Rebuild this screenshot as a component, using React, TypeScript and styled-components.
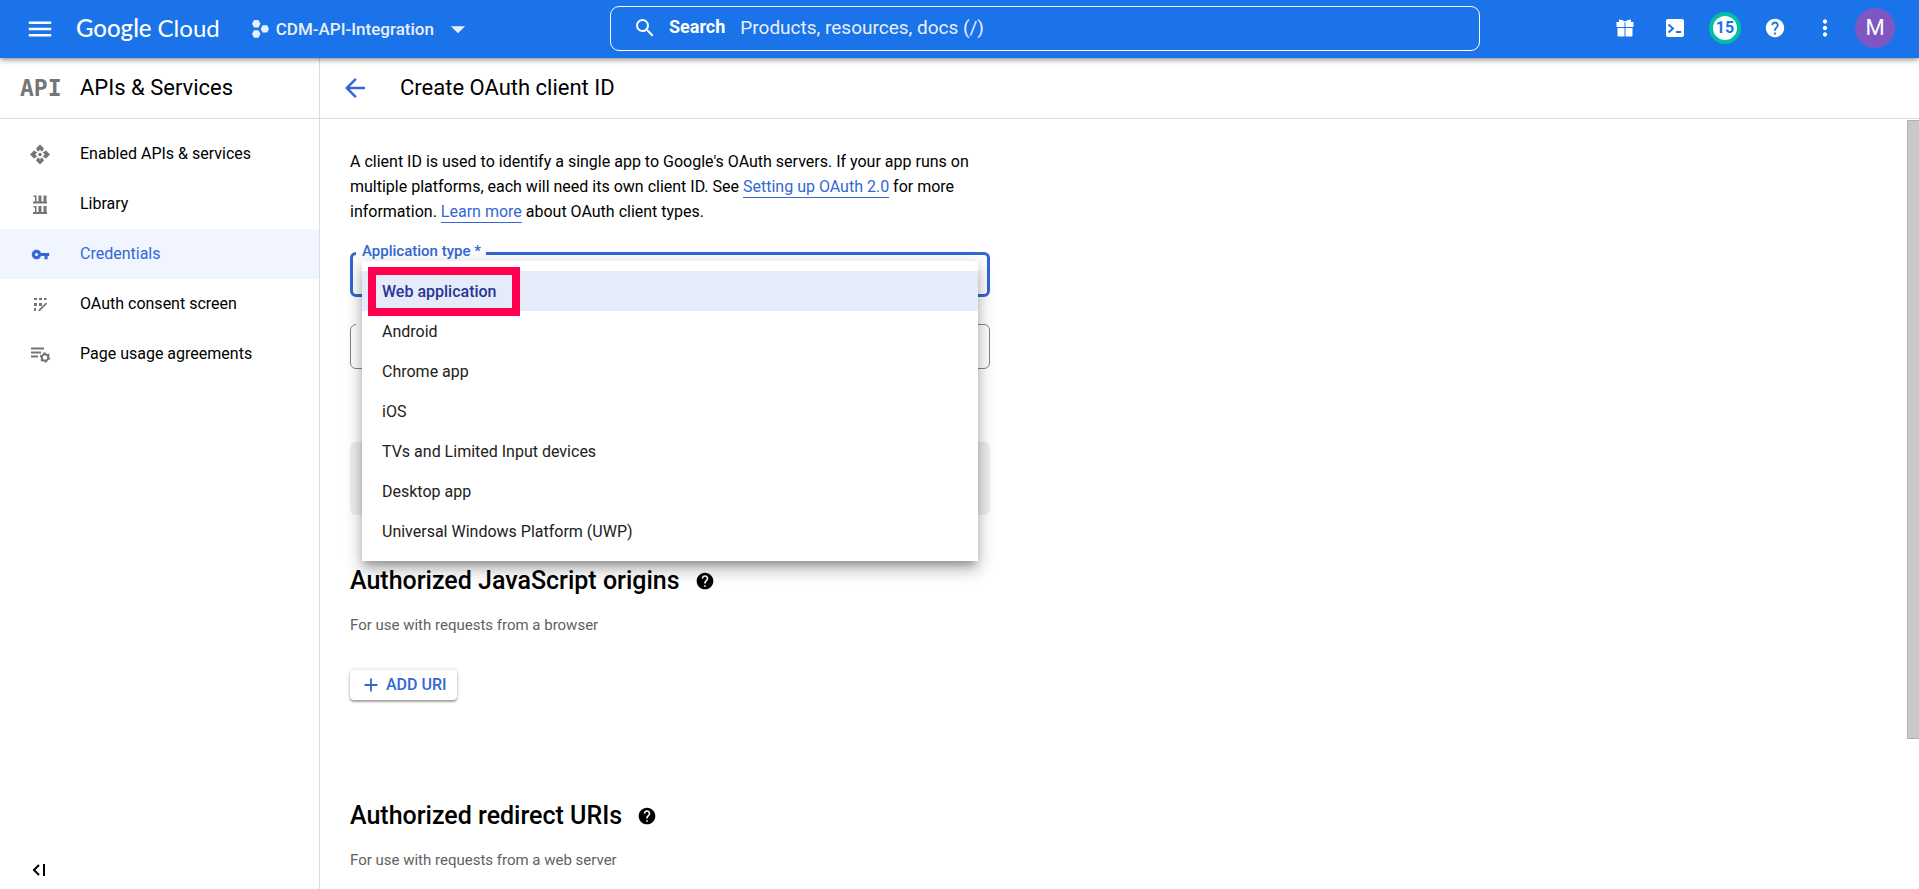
import React from "react";
import styled, { createGlobalStyle } from "styled-components";
import { MdMenu, MdSearch, MdHelp, MdMoreVert, MdVpnKey, MdArrowBack, MdAdd, MdArrowDropDown } from "react-icons/md";

const blue = "#3367d6";

const GlobalStyle = createGlobalStyle`
  * { box-sizing: border-box; }
  html, body, #root { height: 100%; }
  body { margin: 0; background: #fff; color: #000; font: 400 16px/20px Roboto, sans-serif; overflow: hidden; }
  button, input, select { font: inherit; color: inherit; }
  button { border: 0; padding: 0; background: none; cursor: pointer; }
  svg { display: block; flex: none; }
`;

const Page = styled.div`
  height: 100%;
  display: flex;
  flex-direction: column;
`;

const TopBar = styled.header`
  position: relative;
  z-index: 2;
  flex: none;
  height: 58px;
  display: flex;
  align-items: center;
  background: #1a73e8;
  color: #fff;
  box-shadow: 0 1px 6px rgba(0, 0, 0, 0.55);
`;

const BrandArea = styled.div`
  flex: none;
  width: 610px;
  display: flex;
  align-items: center;
  padding-left: 25px;
`;

const IconButton = styled.button`
  flex: none;
  width: 30px;
  height: 30px;
  display: flex;
  align-items: center;
  justify-content: center;
`;

const Logo = styled.a`
  margin-left: 21px;
  padding-bottom: 2px;
  display: flex;
  gap: 6px;
  color: #fff;
  text-decoration: none;
  font: 400 24px/30px Lato, sans-serif;
`;

const LogoStrong = styled.span`
  font-weight: 500;
`;

const ProjectButton = styled.button`
  margin-left: 32px;
  display: flex;
  align-items: center;
  gap: 7px;
  font-size: 17px;
  line-height: 24px;
  font-weight: 500;
  color: #e8f0fe;
`;

const SearchBox = styled.label`
  flex: 0 1 870px;
  height: 45px;
  display: flex;
  align-items: center;
  padding: 0 22px;
  margin-bottom: 2px;
  border: 1px solid #fff;
  border-radius: 9px;
  font-size: 18px;
  line-height: 24px;
`;

const SearchLabel = styled.span`
  margin: 0 15px 0 12px;
  padding-bottom: 2px;
  font-weight: 700;
`;

const SearchInput = styled.input`
  flex: 1;
  min-width: 0;
  border: 0;
  padding: 0;
  outline: 0;
  background: none;
  font-size: 19px;
  &::placeholder { color: #e8f0fe; opacity: 1; }
`;

const Tools = styled.div`
  margin: 0 24px 2px auto;
  display: flex;
  align-items: center;
  gap: 10px;
`;

const ToolButton = styled.button`
  width: 40px;
  height: 40px;
  display: flex;
  align-items: center;
  justify-content: center;
`;

const CountBadge = styled.span`
  width: 32px;
  height: 32px;
  border: 4px solid #00bfa5;
  border-radius: 50%;
  background: #fff;
  color: #1a73e8;
  font-size: 16px;
  line-height: 24px;
  font-weight: 700;
`;

const Avatar = styled.button`
  width: 40px;
  height: 40px;
  border-radius: 50%;
  background: #7e57c2;
  font-size: 22px;
`;

const Body = styled.div`
  flex: 1;
  min-height: 0;
  display: flex;
`;

const Sidebar = styled.nav`
  flex: none;
  width: 320px;
  display: flex;
  flex-direction: column;
  border-right: 1px solid #dadce0;
`;

const SidebarHead = styled.div`
  flex: none;
  height: 61px;
  display: flex;
  align-items: center;
  padding: 0 20px;
  border-bottom: 1px solid #dadce0;
  font-size: 22px;
  line-height: 28px;
`;

const ApiMark = styled.span`
  width: 60px;
  color: #757575;
  font: 700 23px/28px "DejaVu Sans Mono", monospace;
`;

const NavList = styled.div`
  flex: 1;
  padding-top: 10px;
`;

const NavLink = styled.a<{ $active?: boolean }>`
  height: 50px;
  display: flex;
  align-items: center;
  padding: 0 28px;
  text-decoration: none;
  color: ${(p) => (p.$active ? blue : "#000")};
  background: ${(p) => (p.$active ? "#f0f5ff" : "transparent")};
`;

const NavIcon = styled.span<{ $active?: boolean }>`
  width: 24px;
  margin-right: 28px;
  display: flex;
  justify-content: center;
  color: ${(p) => (p.$active ? blue : "#757575")};
`;

const Collapse = styled(IconButton)`
  margin: 0 0 4px 24px;
  color: #000;
`;

const Main = styled.main`
  flex: 1;
  min-width: 0;
  display: flex;
  flex-direction: column;
`;

const PageHead = styled.div`
  flex: none;
  height: 61px;
  display: flex;
  align-items: center;
  gap: 30px;
  padding-left: 20px;
  border-bottom: 1px solid #dadce0;
`;

const PageTitle = styled.h1`
  margin: 0;
  font-size: 22px;
  line-height: 28px;
  font-weight: 400;
`;

const ScrollArea = styled.div`
  flex: 1;
  min-height: 0;
  display: flex;
`;

const Form = styled.form`
  flex: 1;
  min-width: 0;
  overflow-y: auto;
  scrollbar-width: none;
  padding: 30px;
`;

const Track = styled.div`
  flex: none;
  width: 12px;
  padding-top: 1px;
`;

const Thumb = styled.div`
  height: 80.5%;
  background: #c9c9c9;
  border: 1px solid #b0b0b0;
  border-right: 0;
`;

const Intro = styled.p`
  max-width: 640px;
  margin: 0 0 28px;
  line-height: 25px;
`;

const InlineLink = styled.a`
  color: ${blue};
  text-decoration: underline 1px;
  text-underline-offset: 5px;
  text-decoration-skip-ink: none;
`;

const Field = styled.div`
  position: relative;
  max-width: 640px;
  height: 45px;
  margin-bottom: 27px;
`;

const FieldLabel = styled.label<{ $active?: boolean }>`
  position: absolute;
  left: 6px;
  top: -11px;
  padding: 0 5px 0 6px;
  background: #fff;
  font-size: 15px;
  line-height: 20px;
  font-weight: 500;
  color: ${(p) => (p.$active ? blue : "#757575")};
`;

const SelectBox = styled.select`
  width: 100%;
  height: 100%;
  appearance: none;
  background: #fff;
  border: 3px solid ${blue};
  border-radius: 6px;
  outline: 0;
`;

const TextBox = styled.input`
  width: 100%;
  height: 100%;
  background: #fff;
  border: 1px solid #80868b;
  border-radius: 6px;
  outline: 0;
`;

const Menu = styled.div`
  position: absolute;
  z-index: 1;
  top: 9px;
  left: 12px;
  right: 12px;
  padding: 10px 0;
  background: #fff;
  box-shadow: 0 6px 8px -3px rgba(0, 0, 0, 0.28), 0 10px 14px 1px rgba(0, 0, 0, 0.15), 0 3px 18px 2px rgba(0, 0, 0, 0.12);
`;

const Option = styled.button<{ $selected?: boolean }>`
  display: block;
  width: 100%;
  height: 40px;
  padding: 2px 20px 0;
  text-align: left;
  font-weight: ${(p) => (p.$selected ? 500 : 400)};
  color: ${(p) => (p.$selected ? "#283593" : "#212121")};
  background: ${(p) => (p.$selected ? "#e5ebf9" : "transparent")};
`;

const Highlight = styled.div`
  position: absolute;
  top: 6px;
  left: 6px;
  width: 152px;
  height: 49px;
  border: 8px solid #ff004f;
  pointer-events: none;
`;

const Notice = styled.div`
  max-width: 640px;
  height: 73px;
  margin: 73px 0 50px;
  border-radius: 6px;
  background: #eee;
`;

const Section = styled.section`
  margin-bottom: 100px;
`;

const SectionTitle = styled.h2`
  display: flex;
  align-items: center;
  gap: 15px;
  margin: 0 0 18px;
  font-size: 25px;
  line-height: 32px;
  font-weight: 500;
`;

const Hint = styled.p`
  margin: 0 0 35px;
  font-size: 15px;
  line-height: 20px;
  color: #616161;
`;

const AddButton = styled.button`
  height: 30px;
  display: flex;
  align-items: center;
  gap: 4px;
  padding: 0 10px;
  border-radius: 4px;
  background: #fff;
  color: ${blue};
  font-weight: 500;
  box-shadow: 0 2px 2px rgba(0, 0, 0, 0.3), 0 0 4px rgba(0, 0, 0, 0.18);
`;

const ProjectIcon = () => (
  <svg width="17" height="18" viewBox="0 0 17 18" fill="currentColor">
    <path d="M2 0h4.500l2 3.700-2 3.700H2L0 3.700zM2 10.300h4.500l2 3.700-2 3.700H2L0 14zM10.600 5.200h4.500l2 3.700-2 3.700h-4.500L8.700 8.900z" />
  </svg>
);

const GiftIcon = () => (
  <svg width="18" height="18" viewBox="0 0 18 18" fill="currentColor">
    <path d="M3 0.500l3 .5 3 1.500L12 1l3-.5V3h2.500v5H9.500V3.500h-1V8H0.500V3H3zM1.500 9h7v8.500h-6a1 1 0 0 1-1-1zM9.500 9h7v7.500a1 1 0 0 1-1 1h-6z" />
  </svg>
);

const ShellIcon = () => (
  <svg width="18" height="18" viewBox="0 0 18 18">
    <rect width="18" height="18" rx="2" fill="#fff" />
    <path d="M2.500 5.500l4.500 4-4.500 4M10 13h5" fill="none" stroke="#1a73e8" strokeWidth="2" />
  </svg>
);

const ApisIcon = () => (
  <svg width="24" height="24" viewBox="0 0 24 24" fill="currentColor">
    <circle cx="12" cy="12.500" r="1.700" />
    <path d="M12 2.500l4 4-2 3.200L12 7.800l-2 1.900-2-3.200zM12 22.500l4-4-2-3.200-2 1.900-2-1.900-2 3.200zM2 12.500l4-4 3.200 2-1.900 2 1.900 2-3.200 2zM22 12.500l-4-4-3.200 2 1.900 2-1.900 2 3.200 2z" />
  </svg>
);

const LibraryIcon = () => (
  <svg width="24" height="24" viewBox="0 0 24 24" fill="currentColor">
    <path d="M5.500 3.500h3v6h2v-6h3v6h2v-6h3v6h.5v2H5v-2h2v-4.500H5.500zM5.500 14h3v6h2v-6h3v6h2v-6h3v6h.5v2H5v-2h2v-4.500H5.500z" />
  </svg>
);

const ConsentIcon = () => (
  <svg width="24" height="24" viewBox="0 0 24 24" fill="currentColor">
    <path d="M6 6h3v2H6zM11 6h3v2h-3zM16 6h2.500v2H16zM6 11h3v3H6zM11 11h3v3h-3zM6 16h2v3H6zM18 10.500l1.200 1.200-7.400 7.300H10.500v-1.200z" />
  </svg>
);

const AgreementsIcon = () => (
  <svg width="24" height="24" viewBox="0 0 24 24" fill="none" stroke="currentColor" strokeWidth="2">
    <path d="M3 6.500h13M3 10.500h10M3 14.500h7" />
    <circle cx="17" cy="15.500" r="3.200" />
    <circle cx="17" cy="15.500" r="4.400" strokeWidth="1.600" strokeDasharray="2.300 2.300" />
  </svg>
);

const CollapseIcon = () => (
  <svg width="14" height="12" viewBox="0 0 14 12" fill="none" stroke="currentColor" strokeWidth="2">
    <path d="M7 1L2 6l5 5M12 0v12" />
  </svg>
);

const navItems = [
  { label: "Enabled APIs & services", icon: <ApisIcon /> },
  { label: "Library", icon: <LibraryIcon /> },
  { label: "Credentials", icon: <MdVpnKey size={19} />, active: true },
  { label: "OAuth consent screen", icon: <ConsentIcon /> },
  { label: "Page usage agreements", icon: <AgreementsIcon /> },
];

const applicationTypes = [
  "Web application",
  "Android",
  "Chrome app",
  "iOS",
  "TVs and Limited Input devices",
  "Desktop app",
  "Universal Windows Platform (UWP)",
];

export default function App() {
  return (
    <Page>
      <GlobalStyle />
      <TopBar>
        <BrandArea>
          <IconButton aria-label="Main menu"><MdMenu size={30} /></IconButton>
          <Logo href="#"><LogoStrong>Google</LogoStrong><span>Cloud</span></Logo>
          <ProjectButton><ProjectIcon />CDM-API-Integration<MdArrowDropDown size={34} /></ProjectButton>
        </BrandArea>
        <SearchBox>
          <MdSearch size={24} />
          <SearchLabel>Search</SearchLabel>
          <SearchInput placeholder="Products, resources, docs (/)" />
        </SearchBox>
        <Tools>
          <ToolButton aria-label="Free trial"><GiftIcon /></ToolButton>
          <ToolButton aria-label="Cloud Shell"><ShellIcon /></ToolButton>
          <ToolButton aria-label="Notifications"><CountBadge>15</CountBadge></ToolButton>
          <ToolButton aria-label="Help"><MdHelp size={22} /></ToolButton>
          <ToolButton aria-label="More"><MdMoreVert size={26} /></ToolButton>
          <Avatar>M</Avatar>
        </Tools>
      </TopBar>
      <Body>
        <Sidebar>
          <SidebarHead><ApiMark>API</ApiMark>APIs &amp; Services</SidebarHead>
          <NavList>
            {navItems.map((item) => (
              <NavLink key={item.label} href="#" $active={item.active}>
                <NavIcon $active={item.active}>{item.icon}</NavIcon>
                {item.label}
              </NavLink>
            ))}
          </NavList>
          <Collapse aria-label="Collapse navigation"><CollapseIcon /></Collapse>
        </Sidebar>
        <Main>
          <PageHead>
            <IconButton aria-label="Back"><MdArrowBack size={30} color={blue} /></IconButton>
            <PageTitle>Create OAuth client ID</PageTitle>
          </PageHead>
          <ScrollArea>
            <Form>
              <Intro>
                A client ID is used to identify a single app to Google's OAuth servers. If your app runs on multiple
                platforms, each will need its own client ID. See <InlineLink href="#">Setting up OAuth 2.0</InlineLink> for
                more information. <InlineLink href="#">Learn more</InlineLink> about OAuth client types.
              </Intro>
              <Field>
                <SelectBox id="app-type" />
                <FieldLabel htmlFor="app-type" $active>Application type *</FieldLabel>
                <Menu role="listbox">
                  {applicationTypes.map((type, i) => (
                    <Option key={type} type="button" role="option" aria-selected={i === 0} $selected={i === 0}>{type}</Option>
                  ))}
                  <Highlight />
                </Menu>
              </Field>
              <Field>
                <TextBox id="client-name" aria-label="Name" />
                <FieldLabel htmlFor="client-name">&nbsp;</FieldLabel>
              </Field>
              <Notice />
              <Section>
                <SectionTitle>Authorized JavaScript origins<MdHelp size={20} /></SectionTitle>
                <Hint>For use with requests from a browser</Hint>
                <AddButton type="button"><MdAdd size={22} />ADD URI</AddButton>
              </Section>
              <Section>
                <SectionTitle>Authorized redirect URIs<MdHelp size={20} /></SectionTitle>
                <Hint>For use with requests from a web server</Hint>
              </Section>
            </Form>
            <Track><Thumb /></Track>
          </ScrollArea>
        </Main>
      </Body>
    </Page>
  );
}
